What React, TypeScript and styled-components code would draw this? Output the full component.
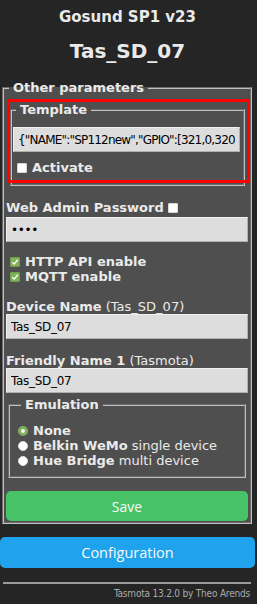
import React from "react";
import styled, { createGlobalStyle } from "styled-components";

const Global = createGlobalStyle`
  html, body { margin: 0; padding: 0; background: #252525; }
  body { font-family: "DejaVu Sans", Verdana, sans-serif; font-size: 13px; color: #eaeaea; }
`;

const Page = styled.div`
  width: 255px;
  display: flex;
  flex-direction: column;
  padding-top: 8px;
`;

const Module = styled.h3`
  margin: 0;
  text-align: center;
  font-size: 15px;
  font-weight: bold;
  line-height: 18px;
`;

const DeviceTitle = styled.h2`
  margin: 13px 0 0;
  text-align: center;
  font-size: 20px;
  font-weight: bold;
  line-height: 24px;
`;

const Fieldset = styled.fieldset<{ $m?: string; $p?: string }>`
  margin: ${(p) => p.$m || "0"};
  padding: ${(p) => p.$p || "0"};
  border: 2px groove #c0c0c0;
  background: #4f4f4f;
  min-width: 0;
`;

const Legend = styled.legend`
  font-weight: bold;
  font-size: 13px;
  padding: 0 4px;
  margin-left: 3px;
  line-height: 16px;
`;

const Highlight = styled.div`
  position: relative;
  padding-top: 6px;
`;

const RedFrame = styled.div`
  position: absolute;
  left: 1px;
  right: -2px;
  top: 3px;
  bottom: 3px;
  border: 3px solid #f00;
  pointer-events: none;
`;

const Input = styled.input<{ $m?: string; $ls?: number }>`
  display: block;
  box-sizing: border-box;
  width: 100%;
  height: 25px;
  margin: ${(p) => p.$m || "0"};
  padding: 0 4px;
  background: #dddddd;
  color: #000;
  border: 1px solid #f0f0f0;
  border-right-color: #b0b0b0;
  border-bottom-color: #b0b0b0;
  font-family: "DejaVu Sans", Verdana, sans-serif;
  font-size: 12px;
  letter-spacing: ${(p) => (p.$ls ?? -0.3)}px;
  outline: none;
`;

const Row = styled.label<{ $m?: string }>`
  display: flex;
  align-items: center;
  gap: 5px;
  height: 15px;
  margin: ${(p) => p.$m || "0"};
  line-height: 15px;
`;

const Label = styled.div<{ $m?: string }>`
  margin: ${(p) => p.$m || "0"};
  line-height: 15px;
  height: 15px;
  display: flex;
  align-items: center;
  gap: 4px;
`;

const B = styled.b`
  font-weight: bold;
`;

const Box = styled.span<{ $on?: boolean }>`
  display: inline-flex;
  align-items: center;
  justify-content: center;
  width: 10px;
  height: 10px;
  box-sizing: border-box;
  border-radius: 1px;
  background: ${(p) => (p.$on ? "#7fb15c" : "#ffffff")};
  border: 1px solid ${(p) => (p.$on ? "#6fa04d" : "#d8d8d8")};
  flex: none;
`;

const Radio = styled.span<{ $on?: boolean }>`
  display: inline-block;
  width: 10px;
  height: 10px;
  box-sizing: border-box;
  border-radius: 50%;
  flex: none;
  background: ${(p) => (p.$on ? "#f4f4f4" : "#ffffff")};
  border: ${(p) => (p.$on ? "3px solid #7fb15c" : "1px solid #e0e0e0")};
`;

const Button = styled.button<{ $bg: string; $h: number; $m?: string; $fs: number }>`
  display: block;
  width: 100%;
  height: ${(p) => p.$h}px;
  margin: ${(p) => p.$m || "0"};
  background: ${(p) => p.$bg};
  color: #fafafa;
  border: 0;
  border-radius: 5px;
  font-family: "Open Sans", "Noto Sans", sans-serif;
  font-size: ${(p) => p.$fs}px;
  padding: 0;
`;

const Footer = styled.div`
  display: flex;
  flex-direction: column;
  align-items: stretch;
  margin-top: 14px;
`;

const Hr = styled.div`
  height: 2px;
  margin: 0 4px 0 3px;
  background: #9a9a9a;
`;

const FootText = styled.div`
  text-align: right;
  font-family: "DejaVu Sans Condensed", "DejaVu Sans", sans-serif;
  font-stretch: condensed;
  font-size: 10px;
  letter-spacing: -0.2px;
  color: #aaaaaa;
  margin: 3px 5px 0 0;
  line-height: 14px;
`;

const Check = () => (
  <svg width="8" height="8" viewBox="0 0 8 8">
    <path d="M1.2 4.2 L3.2 6.1 L6.8 1.8" fill="none" stroke="#fff" strokeWidth="1.4" />
  </svg>
);

export default function App() {
  return (
    <>
      <Global />
      <Page>
        <Module>Gosund SP1 v23</Module>
        <DeviceTitle>Tas_SD_07</DeviceTitle>
        <Fieldset $m="17px 3px 0 2px" $p="0 2px 1px 2px">
          <Legend>Other parameters</Legend>
          <Highlight>
            <RedFrame />
            <Fieldset $m="0 3px 0 4px" $p="9px 3px 9px 1px">
              <Legend>Template</Legend>
              <Input $ls={-0.8} defaultValue={'{"NAME":"SP112new","GPIO":[321,0,320,0,0,0,0,0,0,0]}'} />
              <Row $m="8px 0 0 4px">
                <Box />
                <B>Activate</B>
              </Row>
            </Fieldset>
          </Highlight>
          <Label $m="14px 0 2px">
            <B>Web Admin Password</B>
            <Box />
          </Label>
          <Input type="password" defaultValue="••••" />
          <Row $m="12px 0 0 4px">
            <Box $on>
              <Check />
            </Box>
            <B>HTTP API enable</B>
          </Row>
          <Row $m="0 0 0 4px">
            <Box $on>
              <Check />
            </Box>
            <B>MQTT enable</B>
          </Row>
          <Label $m="15px 0 0">
            <span>
              <B>Device Name</B> (Tas_SD_07)
            </span>
          </Label>
          <Input defaultValue="Tas_SD_07" />
          <Label $m="14px 0 0">
            <span>
              <B>Friendly Name 1</B> (Tasmota)
            </span>
          </Label>
          <Input defaultValue="Tas_SD_07" />
          <Fieldset $m="4px 2px 0 2px" $p="10px 6px 8px 8px">
            <Legend>Emulation</Legend>
            <Row>
              <Radio $on />
              <B>None</B>
            </Row>
            <Row>
              <Radio />
              <span>
                <B>Belkin WeMo</B> single device
              </span>
            </Row>
            <Row>
              <Radio />
              <span>
                <B>Hue Bridge</B> multi device
              </span>
            </Row>
          </Fieldset>
          <Button $bg="#47c266" $h={30} $fs={14} $m="13px 0 0">
            Save
          </Button>
        </Fieldset>
        <Button $bg="#1fa3ec" $h={31} $fs={14.5} $m="13px 0 0">
          Configuration
        </Button>
        <Footer>
          <Hr />
          <FootText>Tasmota 13.2.0 by Theo Arends</FootText>
        </Footer>
      </Page>
    </>
  );
}
